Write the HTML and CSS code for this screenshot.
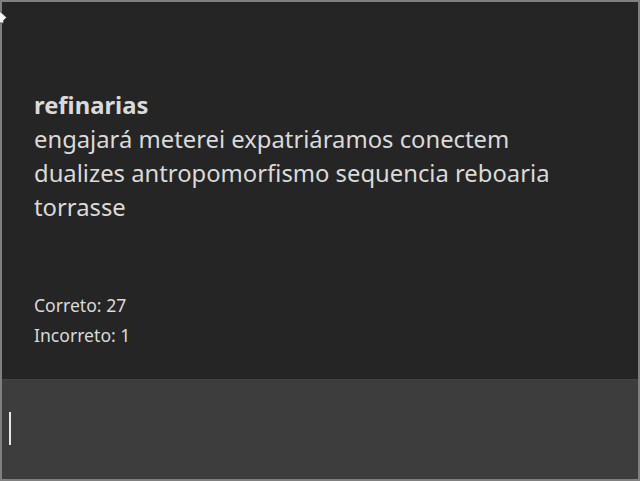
FILE: index.html
```html
<!DOCTYPE html>
<html lang="pt">
<head>
<meta charset="utf-8">
<link rel="stylesheet" href="styles.css">
</head>
<body>
<div class="window">
  <main class="content">
    <div class="prompt">
      <div class="word">refinarias</div>
      <div class="sentence">engajará meterei expatriáramos conectem dualizes antropomorfismo sequencia reboaria torrasse</div>
    </div>
    <div class="stats">
      <div class="stat">Correto: 27</div>
      <div class="stat">Incorreto: 1</div>
    </div>
  </main>
  <div class="input"><span class="caret"></span></div>
</div>
<svg class="pointer" width="10" height="20" viewBox="0 0 10 20"><path d="M-2 1.5 L6.5 9.5 L3.5 12.5 L3.5 15 L-2 15 Z" fill="#f4f4f4" stroke="#555555" stroke-width="1"/></svg>
</body>
</html>
```
FILE: styles.css
```css
html, body {
  margin: 0;
  padding: 0;
  background: #808080;
}
body {
  position: relative;
}
.window {
  width: 636px;
  height: 477px;
  margin: 2px;
  background: #252525;
  display: flex;
  flex-direction: column;
  font-family: "Noto Sans", "Open Sans", sans-serif;
  color: #dadada;
  overflow: hidden;
}
.content {
  flex: 1;
  padding: 86px 56px 0 32px;
}
.word {
  font-weight: bold;
  font-size: 23.8px;
  line-height: 34px;
}
.sentence {
  font-size: 23.8px;
  line-height: 34px;
}
.stats {
  margin-top: 66px;
}
.stat {
  font-size: 17.6px;
  line-height: 30px;
}
.input {
  height: 99px;
  background: #3d3d3d;
  border-top: 1px solid #434343;
  display: flex;
  align-items: center;
  padding-left: 7px;
}
.caret {
  width: 2px;
  height: 33px;
  background: #e8e8e8;
  margin-top: -2px;
}
.pointer {
  position: absolute;
  left: 0;
  top: 8px;
}
```
